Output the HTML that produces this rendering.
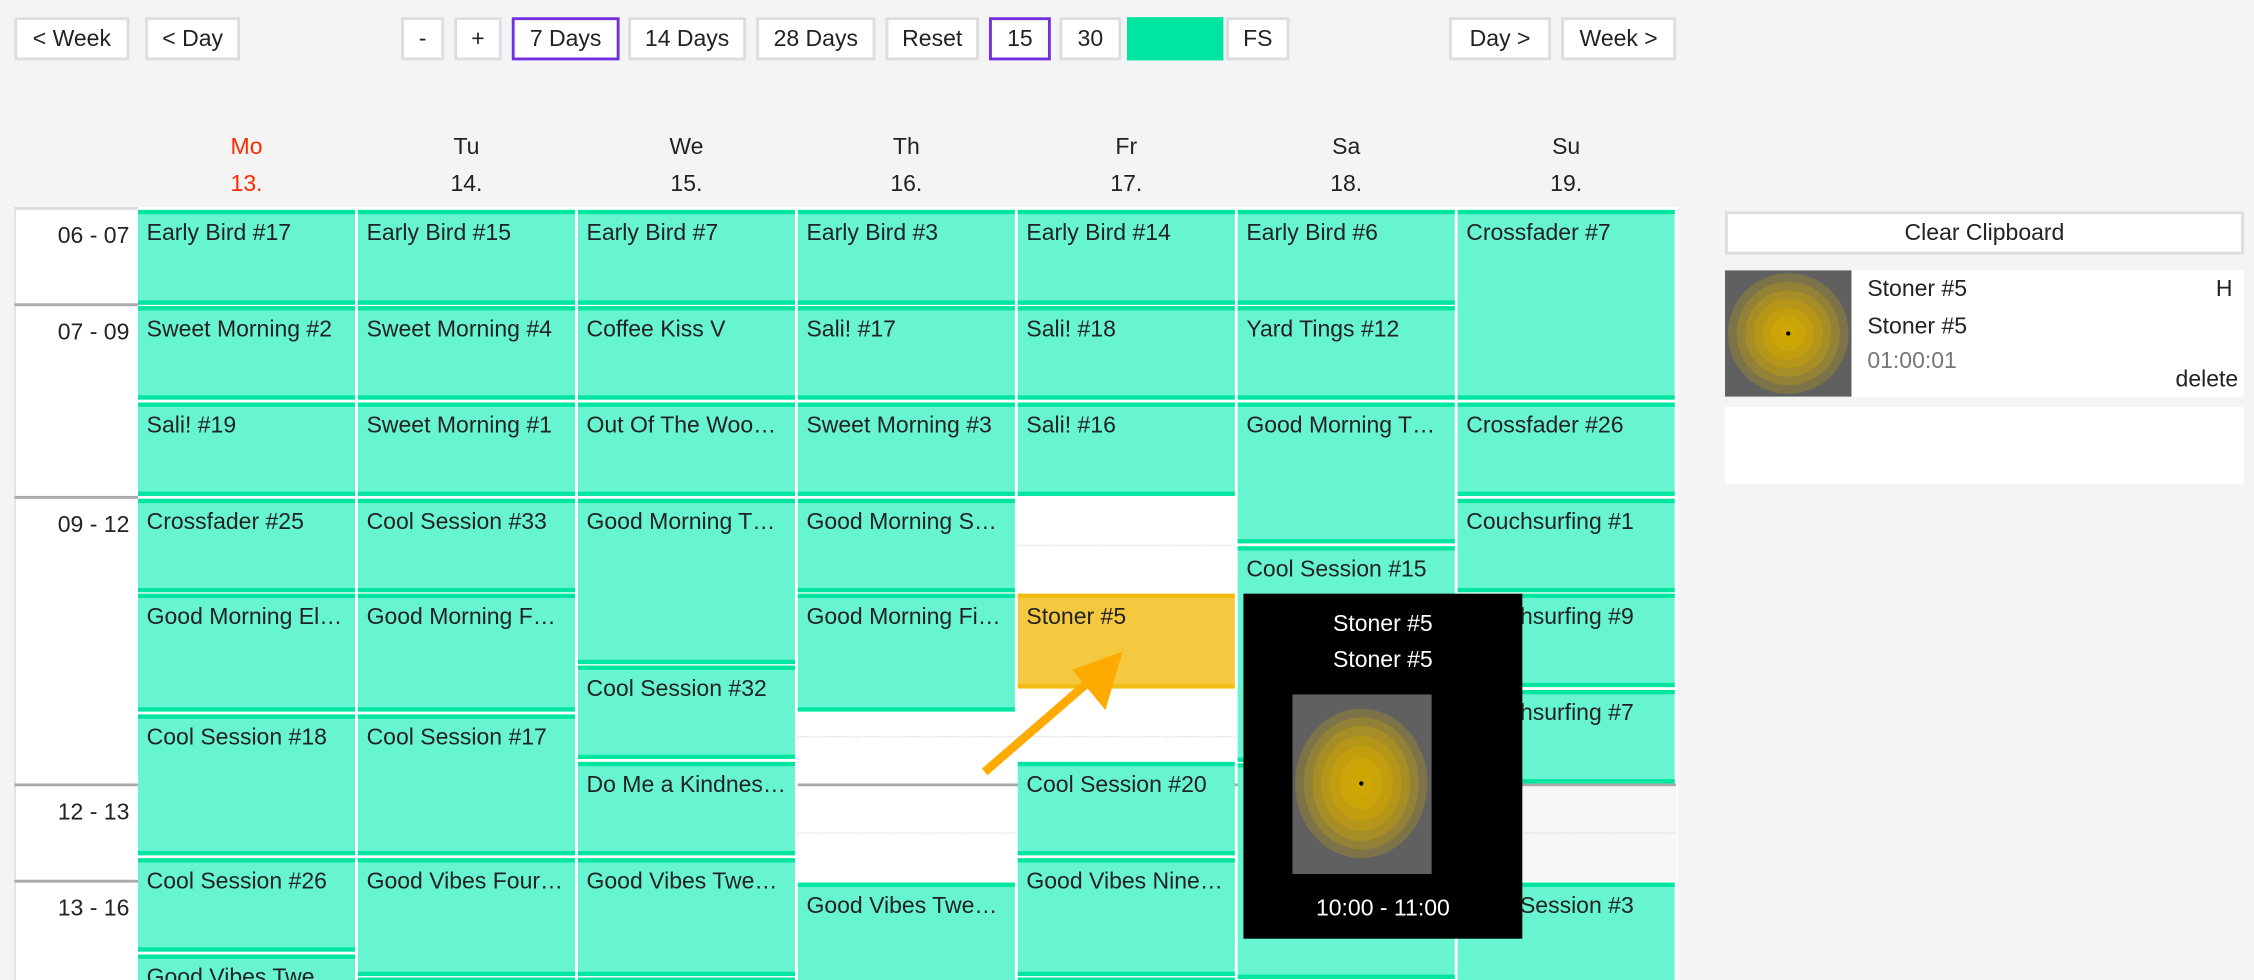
<!DOCTYPE html>
<html><head><meta charset="utf-8"><style>
html,body{margin:0;padding:0;background:#f4f4f4;width:2254px;height:980px;overflow:hidden}
#w{position:absolute;left:0;top:0;width:1568px;height:682px;overflow:hidden;transform:scale(1.4375);transform-origin:0 0;font-family:"Liberation Sans",Arial,sans-serif;color:#222;font-size:16px}
.b{position:absolute;top:12px;height:30px;box-sizing:border-box;background:#fff;border:2px solid #ddd;text-align:center;line-height:27px;font-size:16px}
.p{border-color:#7030e0}
.h{position:absolute;width:151px;text-align:center;font-size:16px}
.ev{position:absolute;width:151px;box-sizing:border-box;background:#66f5d0;border-top:3px solid #00e6a0;border-bottom:3px solid #00e6a0;padding:4px 6px;white-space:nowrap;overflow:hidden;font-size:16px;line-height:20px}
.wh{position:absolute;background:#fff}
.t{position:absolute;left:10px;width:80px;text-align:right;font-size:16px}
.tl{position:absolute;left:10px;width:86px;height:2px;background:#aaa}
.dl{position:absolute;height:0;border-top:1px dotted #ddd}
</style></head><body><div id="w">
<div class="b" style="left:10px;width:80px">&lt; Week</div>
<div class="b" style="left:101px;width:66px">&lt; Day</div>
<div class="b" style="left:279px;width:30px">-</div>
<div class="b" style="left:316px;width:33px">+</div>
<div class="b p" style="left:356px;width:75px">7 Days</div>
<div class="b" style="left:437px;width:82px">14 Days</div>
<div class="b" style="left:526px;width:83px">28 Days</div>
<div class="b" style="left:616px;width:65px">Reset</div>
<div class="b p" style="left:688px;width:43px">15</div>
<div class="b" style="left:737px;width:43px">30</div>
<div class="b" style="left:784px;width:67px;background:#00e6a0;border-color:#00e6a0"></div>
<div class="b" style="left:853px;width:44px">FS</div>
<div class="b" style="left:1008px;width:71px">Day &gt;</div>
<div class="b" style="left:1086px;width:80px">Week &gt;</div>

<div class="h" style="left:96px;top:94px;color:#ff2a00">Mo</div><div class="h" style="left:96px;top:120px;color:#ff2a00">13.</div>
<div class="h" style="left:249px;top:94px">Tu</div><div class="h" style="left:249px;top:120px">14.</div>
<div class="h" style="left:402px;top:94px">We</div><div class="h" style="left:402px;top:120px">15.</div>
<div class="h" style="left:555px;top:94px">Th</div><div class="h" style="left:555px;top:120px">16.</div>
<div class="h" style="left:708px;top:94px">Fr</div><div class="h" style="left:708px;top:120px">17.</div>
<div class="h" style="left:861px;top:94px">Sa</div><div class="h" style="left:861px;top:120px">18.</div>
<div class="h" style="left:1014px;top:94px">Su</div><div class="h" style="left:1014px;top:120px">19.</div>

<div class="wh" style="left:10px;top:144px;width:1156px;height:540px;border-left:1px solid #ddd"></div>
<div style="position:absolute;left:10px;top:144px;width:86px;height:2px;background:#ddd"></div>
<div class="tl" style="top:211px"></div><div class="tl" style="top:345px"></div><div class="tl" style="top:545px"></div><div class="tl" style="top:612px"></div>
<div style="position:absolute;left:555px;top:545px;width:611px;height:2px;background:#aaa"></div>
<div style="position:absolute;left:1014px;top:547px;width:152px;height:66px;background:#f7f7f7"></div>
<div class="dl" style="left:708px;top:379px;width:151px"></div>
<div class="dl" style="left:708px;top:512px;width:151px"></div>
<div class="dl" style="left:555px;top:512px;width:151px"></div>
<div class="dl" style="left:555px;top:579px;width:151px"></div>
<div class="dl" style="left:1014px;top:579px;width:151px"></div>
<div class="t" style="top:156px">06 - 07</div>
<div class="t" style="top:223px">07 - 09</div>
<div class="t" style="top:357px">09 - 12</div>
<div class="t" style="top:557px">12 - 13</div>
<div class="t" style="top:624px">13 - 16</div>

<div class="ev" style="left:96px;top:146px;height:66px">Early Bird #17</div>
<div class="ev" style="left:96px;top:213px;height:65px">Sweet Morning #2</div>
<div class="ev" style="left:96px;top:280px;height:65px">Sali! #19</div>
<div class="ev" style="left:96px;top:347px;height:65px">Crossfader #25</div>
<div class="ev" style="left:96px;top:413px;height:82px">Good Morning El…</div>
<div class="ev" style="left:96px;top:497px;height:98px">Cool Session #18</div>
<div class="ev" style="left:96px;top:597px;height:65px">Cool Session #26</div>
<div class="ev" style="left:96px;top:664px;height:40px">Good Vibes Twe…</div>

<div class="ev" style="left:249px;top:146px;height:66px">Early Bird #15</div>
<div class="ev" style="left:249px;top:213px;height:65px">Sweet Morning #4</div>
<div class="ev" style="left:249px;top:280px;height:65px">Sweet Morning #1</div>
<div class="ev" style="left:249px;top:347px;height:65px">Cool Session #33</div>
<div class="ev" style="left:249px;top:413px;height:82px">Good Morning F…</div>
<div class="ev" style="left:249px;top:497px;height:98px">Cool Session #17</div>
<div class="ev" style="left:249px;top:597px;height:82px">Good Vibes Four…</div>
<div class="ev" style="left:249px;top:680px;height:20px"></div>

<div class="ev" style="left:402px;top:146px;height:66px">Early Bird #7</div>
<div class="ev" style="left:402px;top:213px;height:65px">Coffee Kiss V</div>
<div class="ev" style="left:402px;top:280px;height:65px">Out Of The Woo…</div>
<div class="ev" style="left:402px;top:347px;height:115px">Good Morning T…</div>
<div class="ev" style="left:402px;top:463px;height:65px">Cool Session #32</div>
<div class="ev" style="left:402px;top:530px;height:65px">Do Me a Kindnes…</div>
<div class="ev" style="left:402px;top:597px;height:82px">Good Vibes Twe…</div>
<div class="ev" style="left:402px;top:680px;height:20px"></div>

<div class="ev" style="left:555px;top:146px;height:66px">Early Bird #3</div>
<div class="ev" style="left:555px;top:213px;height:65px">Sali! #17</div>
<div class="ev" style="left:555px;top:280px;height:65px">Sweet Morning #3</div>
<div class="ev" style="left:555px;top:347px;height:65px">Good Morning S…</div>
<div class="ev" style="left:555px;top:413px;height:82px">Good Morning Fi…</div>
<div class="ev" style="left:555px;top:614px;height:80px">Good Vibes Twe…</div>

<div class="ev" style="left:708px;top:146px;height:66px">Early Bird #14</div>
<div class="ev" style="left:708px;top:213px;height:65px">Sali! #18</div>
<div class="ev" style="left:708px;top:280px;height:65px">Sali! #16</div>
<div class="ev" style="left:708px;top:413px;height:66px;background:#f4c940;border-color:#f2bd10">Stoner #5</div>
<div class="ev" style="left:708px;top:530px;height:65px">Cool Session #20</div>
<div class="ev" style="left:708px;top:597px;height:82px">Good Vibes Nine…</div>
<div class="ev" style="left:708px;top:680px;height:20px"></div>

<div class="ev" style="left:861px;top:146px;height:66px">Early Bird #6</div>
<div class="ev" style="left:861px;top:213px;height:65px">Yard Tings #12</div>
<div class="ev" style="left:861px;top:280px;height:98px">Good Morning T…</div>
<div class="ev" style="left:861px;top:380px;height:150px">Cool Session #15</div>
<div class="ev" style="left:861px;top:531px;height:150px"></div>

<div class="ev" style="left:1014px;top:146px;height:132px">Crossfader #7</div>
<div class="ev" style="left:1014px;top:280px;height:65px">Crossfader #26</div>
<div class="ev" style="left:1014px;top:347px;height:65px">Couchsurfing #1</div>
<div class="ev" style="left:1014px;top:413px;height:65px">Couchsurfing #9</div>
<div class="ev" style="left:1014px;top:480px;height:65px">Couchsurfing #7</div>
<div class="ev" style="left:1014px;top:614px;height:80px">Cool Session #3</div>

<svg style="position:absolute;left:0;top:0" width="1568" height="682"><line x1="685" y1="537" x2="760" y2="472" stroke="#ffaa00" stroke-width="6"/><polygon points="781,453 746,466 769,494" fill="#ffaa00"/></svg>

<div style="position:absolute;left:865px;top:413px;width:194px;height:240px;background:#000;color:#fff;text-align:center">
<div style="position:absolute;top:13px;width:100%">Stoner #5</div>
<div style="position:absolute;top:38px;width:100%">Stoner #5</div>
<svg style="position:absolute;left:34px;top:70px" width="97" height="125"><rect width="97" height="125" fill="#606060"/><g fill="#d4aa00"><ellipse cx="48" cy="62" rx="46" ry="52" opacity=".25"/><ellipse cx="48" cy="62" rx="40" ry="46" opacity=".25"/><ellipse cx="48" cy="62" rx="34" ry="40" opacity=".3"/><ellipse cx="48" cy="62" rx="28" ry="33" opacity=".35"/><ellipse cx="48" cy="62" rx="22" ry="26" opacity=".4"/><ellipse cx="48" cy="62" rx="15" ry="18" opacity=".5"/><ellipse cx="48" cy="62" rx="8" ry="10" opacity=".5"/></g><circle cx="48" cy="62" r="1.5" fill="#000"/></svg>
<div style="position:absolute;top:211px;width:100%">10:00 - 11:00</div>
</div>

<div class="b" style="left:1200px;top:147px;width:361px;height:30px">Clear Clipboard</div>
<div style="position:absolute;left:1200px;top:188px;width:361px;height:88px;background:#fff">
<svg style="position:absolute;left:0;top:0" width="88" height="88"><rect width="88" height="88" fill="#606060"/><g fill="#d4aa00"><circle cx="44" cy="44" r="42" opacity=".25"/><circle cx="44" cy="44" r="36" opacity=".25"/><circle cx="44" cy="44" r="30" opacity=".3"/><circle cx="44" cy="44" r="24" opacity=".35"/><circle cx="44" cy="44" r="18" opacity=".4"/><circle cx="44" cy="44" r="12" opacity=".5"/><circle cx="44" cy="44" r="6" opacity=".5"/></g><circle cx="44" cy="44" r="1.5" fill="#000"/></svg>
<div style="position:absolute;left:99px;top:5px">Stoner #5</div>
<div style="position:absolute;left:99px;top:31px">Stoner #5</div>
<div style="position:absolute;left:99px;top:55px;color:#777">01:00:01</div>
<div style="position:absolute;right:8px;top:5px">H</div>
<div style="position:absolute;right:4px;top:68px">delete</div>
</div>
<div style="position:absolute;left:1200px;top:283px;width:361px;height:54px;background:#fff"></div>
</div></body></html>
